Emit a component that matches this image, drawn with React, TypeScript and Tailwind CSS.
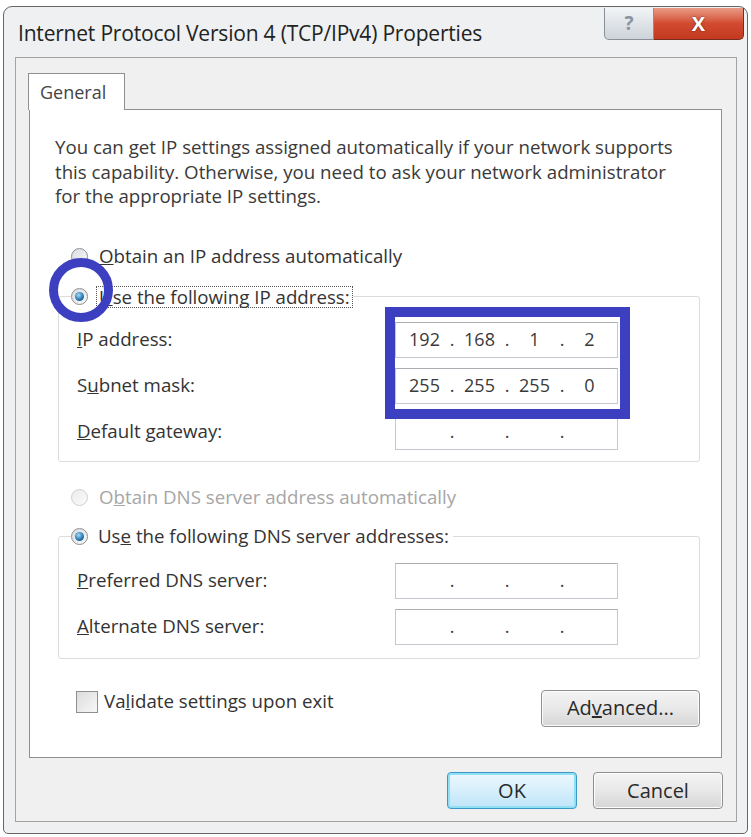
import React from "react";

const Radio = ({ checked = false, disabled = false }: { checked?: boolean; disabled?: boolean }) => (
  <span
    className={
      "w-[17px] h-[17px] rounded-full border flex items-center justify-center shrink-0 bg-linear-to-br " +
      (disabled ? "border-[#cfcfcf] from-[#ececec] to-[#fbfbfb]" : "border-[#8c8f94] from-[#d9dbde] to-[#f9f9f9]")
    }
  >
    {checked && (
      <span className="w-[9px] h-[9px] rounded-full bg-[radial-gradient(circle_at_40%_35%,#a9dcf7,#2a79b5_55%,#123f66)]" />
    )}
  </span>
);

const IpField = ({ parts = ["", "", "", ""] }: { parts?: string[] }) => (
  <div className="w-[223px] h-[36px] border border-[#c5c9cf] border-t-[#abadb3] bg-white flex items-center pl-[5px] text-[18px] text-[#3a3a3a]">
    {parts.map((p, i) => (
      <React.Fragment key={i}>
        <span className="w-[47px] text-center">{p}</span>
        {i < 3 && <span className="w-[8px] text-center">.</span>}
      </React.Fragment>
    ))}
  </div>
);

const Row = ({ label, u, rest, parts }: { label: string; u: string; rest: string; parts?: string[] }) => (
  <div className="flex items-center h-[36px]">
    <span className="w-[318px]">
      {label}
      <span className="underline">{u}</span>
      {rest}
    </span>
    <IpField parts={parts} />
  </div>
);

const Button = ({ children, primary = false }: { children: React.ReactNode; primary?: boolean }) => (
  <div
    className={
      "h-[37px] rounded-[4px] border flex items-center justify-center text-[20px] text-[#2a2a2a] " +
      (primary
        ? "w-[130px] border-[#3c98c4] shadow-[inset_0_0_0_2px_#8fe0f5] bg-linear-to-b from-[#edf8fd] via-[#d6effb] to-[#bfe5f8]"
        : "border-[#8e8f8f] shadow-[inset_0_0_0_1px_#fcfcfc] bg-linear-to-b from-[#f4f4f4] via-[#e8e8e8] to-[#d6d6d6]")
    }
  >
    {children}
  </div>
);

export default function App() {
  return (
    <div className="w-[751px] h-[837px] bg-white pt-[6px] pl-[3px] font-['Open_Sans',sans-serif] text-[#333] text-[18.7px]">
      <div className="w-[745px] h-[828px] border border-[#666] rounded-t-[9px] rounded-b-[5px] bg-[#eef0f1] flex flex-col">
        {/* title bar */}
        <div className="h-[50px] flex items-start justify-between">
          <div className="pl-[14px] pt-[11px] text-[21px] text-[#222] tracking-[-0.2px]">
            Internet Protocol Version 4 (TCP/IPv4) Properties
          </div>
          <div className="flex mt-[1px] mr-[3px]">
            <div className="w-[50px] h-[32px] rounded-bl-[5px] border border-[#8a8f96] border-t-0 bg-linear-to-b from-[#f2f4f6] to-[#cdd3da] flex items-center justify-center text-[19px] font-bold text-[#8893a0]">
              ?
            </div>
            <div className="w-[90px] h-[32px] rounded-br-[5px] border border-[#7a2a20] border-t-0 border-l-0 bg-linear-to-b from-[#e99a86] via-[#d24a30] to-[#c2391f] flex items-center justify-center text-[20px] font-bold text-white [text-shadow:0_0_2px_#5a1a10]">
              X
            </div>
          </div>
        </div>

        {/* client area */}
        <div className="ml-[11px] mr-[10px] h-[765px] border border-[#a3a3a3] bg-[#f0f0f0] flex flex-col">
          <div className="pl-[12px] pt-[14px]">
            <div className="w-[97px] h-[37px] border border-[#8e8f8f] border-b-0 bg-white flex items-center pl-[11px] text-[18px] text-[#444] relative top-[1px]">
              General
            </div>
          </div>

          <div className="ml-[13px] mr-[14px] h-[649px] border border-[#8e8f8f] bg-white flex flex-col pl-[25px] pr-[21px] pt-[25px]">
            <p className="leading-[24.5px] text-[#3a3a3a] pr-[20px]">
              You can get IP settings assigned automatically if your network supports this capability. Otherwise, you need to ask your network administrator for the appropriate IP settings.
            </p>

            <div className="mt-[36px] ml-[16px] h-[24px] flex items-center gap-[11px]">
              <Radio />
              <span>
                <span className="underline">O</span>btain an IP address automatically
              </span>
            </div>

            <fieldset className="relative mt-[16px] ml-[3px] border border-[#dcdcdc] rounded-[3px] pl-[18px] pr-[10px] pb-[11px]">
              <legend className="ml-[-6px] px-[0px] flex items-center gap-[8px] h-[24px]">
                <Radio checked />
                <span className="border border-dotted border-[#555] px-[2px] leading-[20px]">
                  <span className="underline">U</span>se the following IP address:
                </span>
              </legend>
              <div className="flex flex-col gap-[10px] pt-[13px]">
                <Row label="" u="I" rest="P address:" parts={["192", "168", "1", "2"]} />
                <Row label="S" u="u" rest="bnet mask:" parts={["255", "255", "255", "0"]} />
                <Row label="" u="D" rest="efault gateway:" />
              </div>
              {/* annotation: highlight rectangle */}
              <div className="absolute left-[326px] top-[-2px] w-[245px] h-[112px] border-[10px] border-[#3c3fbf]" />
              {/* annotation: circle around selected radio */}
              <div className="absolute left-[-10px] top-[-51px] w-[64px] h-[64px] rounded-full border-[9px] border-[#3c3fbf]" />
            </fieldset>

            <div className="mt-[24px] ml-[16px] h-[24px] flex items-center gap-[11px] text-[#a6a6a6]">
              <Radio disabled />
              <span>
                O<span className="underline">b</span>tain DNS server address automatically
              </span>
            </div>

            <fieldset className="mt-[15px] ml-[3px] border border-[#dcdcdc] rounded-[3px] pl-[18px] pr-[10px] pb-[13px]">
              <legend className="ml-[-6px] flex items-center gap-[10px] h-[24px]">
                <Radio checked />
                <span className="pr-[4px]">
                  Us<span className="underline">e</span> the following DNS server addresses:
                </span>
              </legend>
              <div className="flex flex-col gap-[10px] pt-[14px]">
                <Row label="" u="P" rest="referred DNS server:" />
                <Row label="" u="A" rest="lternate DNS server:" />
              </div>
            </fieldset>

            <div className="mt-[31px] flex items-start justify-between ml-[21px]">
              <div className="flex items-center gap-[6px] h-[24px]">
                <span className="w-[22px] h-[22px] border border-[#8e8f8f] bg-linear-to-br from-[#dcdcdc] to-[#f7f7f7]" />
                <span>
                  Va<span className="underline">l</span>idate settings upon exit
                </span>
              </div>
              <div className="w-[159px]">
                <Button>
                  Ad<span className="underline">v</span>anced...
                </Button>
              </div>
            </div>
          </div>

          <div className="flex justify-end gap-[16px] mt-[14px] pr-[13px]">
            <Button primary>OK</Button>
            <div className="w-[130px]">
              <Button>Cancel</Button>
            </div>
          </div>
        </div>
      </div>
    </div>
  );
}
